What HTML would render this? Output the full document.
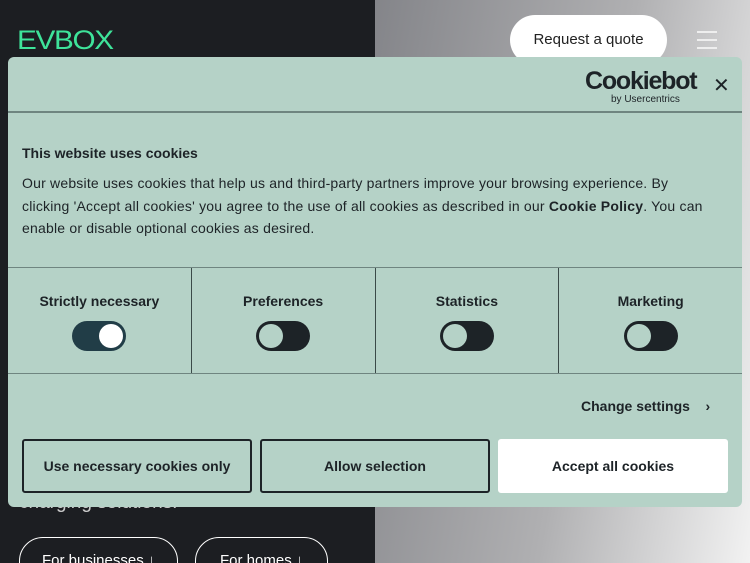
<!DOCTYPE html>
<html><head><style>
*{margin:0;padding:0;box-sizing:border-box}
html{overflow:hidden;width:750px;height:563px}
body{width:750px;height:563px;overflow:hidden;position:relative;font-family:"Liberation Sans",sans-serif;background:linear-gradient(100deg,#7e7f84 40%,#b0b0b2 75%,#f2f2f2 100%)}
.left{position:absolute;left:0;top:0;width:375px;height:563px;background:#1c1e22}
.logo{position:absolute;left:17px;top:25px;color:#3ee39a;font-size:27px;letter-spacing:-1.2px;transform:scaleX(1.1);transform-origin:left}
.rq{position:absolute;left:510px;top:15px;width:157px;height:50px;border-radius:25px;background:#fff;color:#222;font-size:15px;text-align:center;line-height:50px}
.hb{position:absolute;left:697px;width:20px;height:2px;background:#eee}
.pill{position:absolute;top:537px;height:50px;border:1.5px solid #fff;border-radius:24px;color:#fff;font-size:15px;padding:14px 24px}
.sub{position:absolute;left:19px;top:492px;color:#ccc;font-size:19px}
.panel{position:absolute;left:8px;top:57px;width:734px;height:450px;background:#b5d2c7;border-radius:6px;color:#1d2327}
.hdr{height:56px;border-bottom:2px solid #6f8580;position:relative}
.cb{position:absolute;left:577px;top:10px;font-size:25px;font-weight:bold;letter-spacing:-1.2px;color:#1d2327}
.cb small{position:absolute;left:26px;top:27px;font-size:10px;font-weight:normal;letter-spacing:0;white-space:nowrap}
.x{position:absolute;left:705px;top:16px;font-size:20px;font-weight:300}
h3{position:absolute;left:14px;top:88px;font-size:14px}
.txt{position:absolute;left:14px;top:115px;width:684px;font-size:14px;line-height:22.5px;letter-spacing:0.2px}
.grid{position:absolute;left:0;top:210px;width:734px;height:107px;border-top:1px solid #6f8580;border-bottom:1px solid #6f8580;display:flex}
.c{flex:1;border-right:1px solid #3a4a48;text-align:center;font-weight:bold;font-size:14px;padding-top:25px}
.c:last-child{border:none}
.t{width:54px;height:30px;border-radius:15px;background:#1d2327;margin:12px auto 0;position:relative}
.t i{position:absolute;left:3px;top:3px;width:24px;height:24px;border-radius:50%;background:#b5d2c7}
.t.on{background:#213d47}.t.on i{left:auto;right:3px;background:#fff}
.cs{position:absolute;left:573px;top:341px;font-size:14px;font-weight:bold}
.b{position:absolute;top:382px;height:54px;width:230px;border:2px solid #1d2327;border-radius:3px;font-size:14px;font-weight:bold;text-align:center;line-height:50px}
</style></head><body>
<div class="left"></div>
<div class="logo">EVBOX</div>
<div class="rq">Request a quote</div>
<div class="hb" style="top:31px"></div><div class="hb" style="top:39px"></div><div class="hb" style="top:47px"></div>
<div class="sub">charging solutions.</div>
<div class="pill" style="left:19px;padding:14px 22px">For businesses ↓</div>
<div class="pill" style="left:195px">For homes ↓</div>
<div class="panel">
<div class="hdr"><div class="cb">Cookiebot<small>by Usercentrics</small></div><div class="x">✕</div></div>
<h3>This website uses cookies</h3>
<div class="txt">Our website uses cookies that help us and third-party partners improve your browsing experience. By clicking 'Accept all cookies' you agree to the use of all cookies as described in our <b>Cookie Policy</b>. You can enable or disable optional cookies as desired.</div>
<div class="grid">
<div class="c">Strictly necessary<div class="t on"><i></i></div></div>
<div class="c">Preferences<div class="t"><i></i></div></div>
<div class="c">Statistics<div class="t"><i></i></div></div>
<div class="c">Marketing<div class="t"><i></i></div></div>
</div>
<div class="cs">Change settings &nbsp;&nbsp;&nbsp;›</div>
<div class="b" style="left:14px">Use necessary cookies only</div>
<div class="b" style="left:252px">Allow selection</div>
<div class="b" style="left:490px;background:#fff;border-color:#fff">Accept all cookies</div>
</div>
</body></html>
